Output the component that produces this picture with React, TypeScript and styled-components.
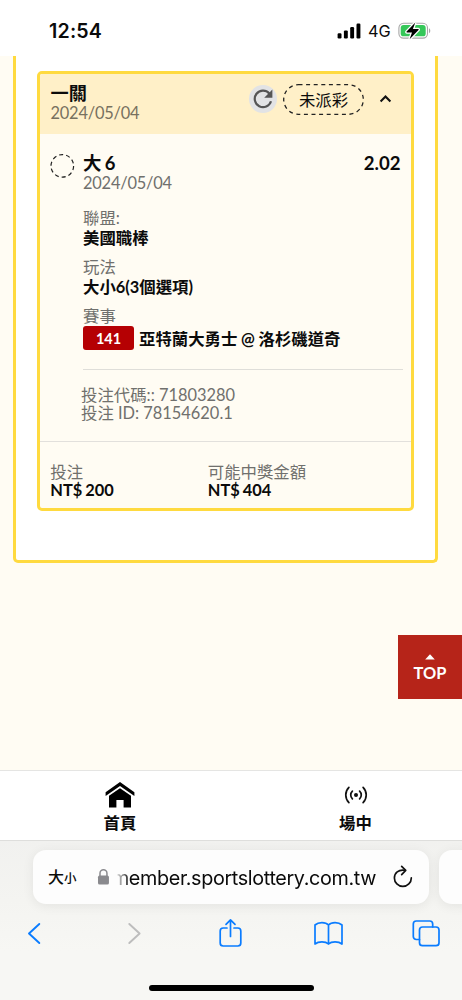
import React from "react";
import styled, { createGlobalStyle } from "styled-components";

const GlobalStyle = createGlobalStyle`
  *, *::before, *::after { box-sizing: border-box; }
  body {
    margin: 0;
    background: #fffcf3;
    color: #0b0b0b;
    font-family: Lato, "Noto Sans CJK TC", sans-serif;
    font-size: 16.4px;
    overflow: hidden;
  }
`;

const Screen = styled.div`
  width: 462px;
  height: 1000px;
  display: flex;
  flex-direction: column;
  overflow: hidden;
`;

const StatusBar = styled.header`
  height: 56px;
  flex: none;
  background: #fff;
  display: flex;
  align-items: center;
  padding: 5px 31px 0 49px;
  font-family: Inter, sans-serif;
`;

const Clock = styled.div`
  flex: 1;
  font-size: 19.6px;
  font-weight: 600;
  letter-spacing: 0.2px;
`;

const Network = styled.div`
  font-size: 16.3px;
  margin: 0 8px 0 7px;
  width: 22px;
  line-height: 20px;
`;

const Page = styled.main`
  flex: 1;
  display: flex;
  flex-direction: column;
  align-items: flex-start;
`;

const Panel = styled.section`
  width: 425px;
  height: 507px;
  margin-left: 13px;
  border: 3px solid #ffda3f;
  border-width: 0 3px 3px;
  border-radius: 0 0 5px 5px;
  background: #fff;
  padding: 15px 21px 0;
`;

const Card = styled.article`
  width: 377px;
  height: 440px;
  border: 3px solid #ffda3f;
  border-radius: 5px;
  background: #fffcf3;
  overflow: hidden;
`;

const CardHeader = styled.div`
  height: 60px;
  background: #fff0c8;
  display: flex;
  align-items: flex-start;
  padding: 9px 19px 0 10.5px;
`;

const Grow = styled.div`
  flex: 1;
  min-width: 0;
`;

const Line = styled.div<{ $h?: number; $top?: number; $bold?: boolean; $size?: number; $muted?: string }>`
  height: ${(p) => p.$h ?? 20}px;
  line-height: ${(p) => p.$h ?? 20}px;
  margin-top: ${(p) => p.$top ?? 0}px;
  font-weight: ${(p) => (p.$bold ? 700 : 400)};
  font-size: ${(p) => p.$size ?? 16.4}px;
  color: ${(p) => p.$muted ?? "#0b0b0b"};
  white-space: nowrap;
  word-spacing: ${(p) => (p.$bold ? -1 : 0)}px;
`;

const DateLine = styled(Line)`
  letter-spacing: -0.2px;
`;

const RefreshButton = styled.button`
  width: 28px;
  height: 28px;
  margin: 2px 6px 0 0;
  padding: 0;
  border: 0;
  border-radius: 50%;
  background: #e2e3e5;
  display: grid;
  place-items: center;
`;

const Pill = styled.div`
  position: relative;
  width: 81px;
  height: 31px;
  margin-top: 1px;
  line-height: 32px;
  text-align: center;
`;

const PillOutline = styled.svg`
  position: absolute;
  inset: 0;
`;

const Caret = styled.svg`
  margin: 11px 0 0 15px;
`;

const Selection = styled.div`
  display: grid;
  grid-template-columns: 33px 1fr;
  padding: 19px 8px 0 9.5px;
  height: 307px;
`;

const Details = styled.div`
  padding-left: 0.5px;
`;

const TitleRow = styled.div`
  display: flex;
  justify-content: space-between;
  padding-right: 2.5px;
`;

const MatchRow = styled.div`
  display: flex;
  align-items: center;
  height: 24px;
  gap: 5px;
  font-weight: 700;
  white-space: nowrap;
  word-spacing: -0.3px;
`;

const MatchNumber = styled.span`
  width: 51px;
  height: 24px;
  border-radius: 3px;
  background: #b50003;
  color: #fff;
  font-size: 14.5px;
  line-height: 25px;
  text-align: center;
`;

const Codes = styled.div`
  margin-top: 19px;
  border-top: 1px solid #dfded9;
  padding-top: 16px;
`;

const CodeLine = styled(Line)`
  margin-left: -2px;
`;

const Summary = styled.div`
  border-top: 1px solid #e2e0dc;
  display: grid;
  grid-template-columns: 157.5px 1fr;
  padding: 21px 0 0 10.3px;
`;

const TopButton = styled.button`
  align-self: flex-end;
  width: 64px;
  height: 64px;
  margin-top: 72px;
  border: 0;
  background: #b62419;
  color: #fff;
  display: flex;
  flex-direction: column;
  align-items: center;
  padding: 18.5px 0 0;
  font: 700 16.4px/26px Lato, sans-serif;
`;

const SiteNav = styled.nav`
  flex: none;
  height: 71px;
  border-top: 1px solid #e5e5e3;
  border-bottom: 1px solid #dededc;
  background: #fff;
  display: grid;
  grid-template-columns: 240px 231px;
`;

const NavItem = styled.div`
  display: flex;
  flex-direction: column;
  align-items: center;
  padding-top: 10px;
  font-weight: 700;
  line-height: 28px;
`;

const Browser = styled.footer`
  flex: none;
  height: 159px;
  background: linear-gradient(#f1f1ef, #f4f4f1 60px, #f7f7f4 110px);
  padding-top: 9px;
`;

const AddressRow = styled.div`
  display: flex;
  gap: 9.5px;
  padding-left: 33px;
`;

const AddressBar = styled.div`
  flex: none;
  width: 396px;
  height: 54px;
  border-radius: 13px;
  background: #fdfdfd;
  box-shadow: 0 2px 12px rgba(0, 0, 0, 0.07);
  display: flex;
  align-items: center;
  padding: 0 15px;
`;

const TextSize = styled.div`
  width: 49px;
  font-family: "Noto Sans CJK TC", sans-serif;
  font-weight: 500;
  font-size: 16px;
  line-height: 24px;
  white-space: nowrap;
`;

const SmallGlyph = styled.span`
  font-size: 12.5px;
`;

const Url = styled.div`
  width: 267.5px;
  display: flex;
  justify-content: flex-end;
  white-space: nowrap;
  font-family: Inter, sans-serif;
  font-size: 19.8px;
  letter-spacing: -0.36px;
  line-height: 30px;
  padding-top: 1px;
  mask-image: linear-gradient(to right, transparent 7px, rgba(0, 0, 0, 0.2) 8px, #000 20px);
`;

const Reload = styled.svg`
  margin-left: 16px;
`;

const Toolbar = styled.div`
  display: flex;
  justify-content: space-between;
  padding: 13px 20px 0 18px;
  height: 80.5px;
`;

const HomeIndicator = styled.div`
  width: 165px;
  height: 6px;
  border-radius: 3px;
  background: #000;
  margin: 0 auto;
`;

const GREY = "#70706d";

function ToolIcon({ children, color = "#0a7cff" }: { children: React.ReactNode; color?: string }) {
  return (
    <svg width="32" height="32" viewBox="0 0 32 32" fill="none" stroke={color} strokeWidth="1.9" strokeLinecap="round" strokeLinejoin="round">
      {children}
    </svg>
  );
}

export default function App() {
  return (
    <Screen>
      <GlobalStyle />
      <StatusBar>
        <Clock>12:54</Clock>
        <svg width="24" height="16" viewBox="0 0 24 16">
          <rect x="0.6" y="10.2" width="3.9" height="5.2" rx="1.2" />
          <rect x="6.9" y="7.4" width="3.9" height="8" rx="1.2" />
          <rect x="13.2" y="4" width="3.9" height="11.4" rx="1.2" />
          <rect x="19.5" y="0.6" width="3.9" height="14.8" rx="1.2" />
        </svg>
        <Network>4G</Network>
        <svg width="33" height="18" viewBox="0 0 33 18">
          <rect x="0.9" y="1.3" width="28.6" height="14.8" rx="4.6" fill="none" stroke="#a7a7a7" strokeWidth="1.1" />
          <rect x="2.7" y="3.1" width="25" height="11.2" rx="2.9" fill="#35c759" />
          <path d="M31 6.3c1.7.8 1.7 4.1 0 4.9z" fill="#a7a7a7" />
          <path d="M17.3 0.5 8.6 9.6c-.4.5-.2.9.4.9h5l-2.4 6.8 8.9-9.3c.4-.5.2-.9-.4-.9h-5.2z" fill="#000" stroke="#fff" strokeWidth="2.6" paintOrder="stroke" />
        </svg>
      </StatusBar>

      <Page>
        <Panel>
          <Card>
            <CardHeader>
              <Grow>
                <Line $bold $size={18.2}>一關</Line>
                <DateLine $muted="#77715f">2024/05/04</DateLine>
              </Grow>
              <RefreshButton>
                <svg width="22" height="22" viewBox="0 0 22 22" fill="none">
                  <path d="M17.3 5.4A8.3 8.3 0 1 0 19 13.3" stroke="#555" strokeWidth="2.2" />
                  <path d="M20.4 1.6v8.2h-8.2z" fill="#555" />
                </svg>
              </RefreshButton>
              <Pill>
                <PillOutline width="81" height="31" fill="none">
                  <rect x="0.7" y="0.7" width="79.6" height="29.6" rx="14.8" stroke="#222" strokeWidth="1.3" strokeDasharray="4 3.6" />
                </PillOutline>
                未派彩
              </Pill>
              <Caret width="13" height="10" viewBox="0 0 13 10" fill="none">
                <path d="M1.6 7.4 6.5 2.5l4.9 4.9" stroke="#111" strokeWidth="2.1" />
              </Caret>
            </CardHeader>

            <Selection>
              <svg width="26" height="26" viewBox="0 0 26 26" fill="none">
                <circle cx="12.3" cy="12.9" r="11.3" stroke="#222" strokeWidth="1.2" strokeDasharray="4.1 3" />
              </svg>
              <Details>
                <TitleRow>
                  <Line $bold $size={18.4}>大 6</Line>
                  <Line $bold $size={18.6}>2.02</Line>
                </TitleRow>
                <DateLine $muted={GREY}>2024/05/04</DateLine>
                <Line $top={15} $muted={GREY}>聯盟:</Line>
                <Line $bold>美國職棒</Line>
                <Line $top={9} $muted={GREY}>玩法</Line>
                <Line $bold>大小6(3個選項)</Line>
                <Line $top={9} $muted={GREY}>賽事</Line>
                <MatchRow>
                  <MatchNumber>141</MatchNumber>
                  <span>亞特蘭大勇士 @ 洛杉磯道奇</span>
                </MatchRow>
                <Codes>
                  <CodeLine $h={18} $muted={GREY}>投注代碼:: 71803280</CodeLine>
                  <CodeLine $h={18} $muted={GREY}>投注 ID: 78154620.1</CodeLine>
                </Codes>
              </Details>
            </Selection>

            <Summary>
              <div>
                <Line $h={18} $muted={GREY}>投注</Line>
                <Line $h={18} $bold>NT$ 200</Line>
              </div>
              <div>
                <Line $h={18} $muted={GREY}>可能中獎金額</Line>
                <Line $h={18} $bold>NT$ 404</Line>
              </div>
            </Summary>
          </Card>
        </Panel>

        <TopButton>
          <svg width="10" height="6" viewBox="0 0 10 6"><path d="M5 0.3 9.8 5.6H.2z" fill="#fff" /></svg>
          TOP
        </TopButton>
      </Page>

      <SiteNav>
        <NavItem>
          <svg width="30" height="28" viewBox="0 0 30 28">
            <path d="M15 1 29.4 11.2v3.7L15 4.9.6 14.9v-3.7z" />
            <path d="M15 7.2 26 14.8V26.6h-7.4v-7.5h-7.2v7.5H4V14.8z" />
          </svg>
          <span>首頁</span>
        </NavItem>
        <NavItem>
          <svg width="24" height="28" viewBox="0 0 24 28" fill="none" stroke="#111" strokeWidth="1.7" strokeLinecap="round">
            <circle cx="12" cy="14" r="2" fill="#111" stroke="none" />
            <path d="M8.4 10.1a5.4 5.4 0 0 0 0 7.8M15.6 10.1a5.4 5.4 0 0 1 0 7.8M4.9 6.4a10.8 10.8 0 0 0 0 15.2M19.1 6.4a10.8 10.8 0 0 1 0 15.2" />
          </svg>
          <span>場中</span>
        </NavItem>
      </SiteNav>

      <Browser>
        <AddressRow>
          <AddressBar>
            <TextSize>大<SmallGlyph>小</SmallGlyph></TextSize>
            <svg width="13" height="18" viewBox="0 0 13 18" fill="none">
              <path d="M3 8.5V5.2a3.5 3.5 0 0 1 7 0v3.3" stroke="#8a8a8e" strokeWidth="1.5" />
              <rect x="1" y="7.6" width="11" height="9" rx="1.6" fill="#8a8a8e" />
            </svg>
            <Url>member.sportslottery.com.tw</Url>
            <Reload width="22" height="24" viewBox="0 0 22 24" fill="none" stroke="#111" strokeWidth="1.7" strokeLinecap="round" strokeLinejoin="round">
              <path d="M12.6 5.2c-6-1-10.2 3-10.2 7.7a8.5 8.5 0 0 0 17 0" />
              <path d="M9.7 1.3 13.8 5.4 9.7 9.6" />
            </Reload>
          </AddressBar>
          <AddressBar />
        </AddressRow>
        <Toolbar>
          <ToolIcon><path d="M21.3 7 11 16.5 21.3 26" /></ToolIcon>
          <ToolIcon color="#bdbdbd"><path d="M13.3 7 23.6 16.5 13.3 26" /></ToolIcon>
          <ToolIcon>
            <path d="M13 11H9.2a3 3 0 0 0-3 3v12a3 3 0 0 0 3 3h14.6a3 3 0 0 0 3-3V14a3 3 0 0 0-3-3H20" strokeWidth="1.7" />
            <path d="M16.5 19.5V3M12 7.3 16.5 2.8 21 7.3" strokeWidth="1.7" />
          </ToolIcon>
          <ToolIcon>
            <path d="M16.5 8C13.5 4.8 6.5 4.8 3 8v19c3.5-2.8 10.5-2.8 13.5 0 3-2.8 10-2.8 13.5 0V8c-3.5-3.2-10.5-3.2-13.5 0zv19" strokeWidth="1.7" />
          </ToolIcon>
          <ToolIcon>
            <rect x="9.5" y="10" width="19.5" height="18.7" rx="3" strokeWidth="1.7" />
            <path d="M9.5 22.5H6.3a3 3 0 0 1-3-3V7a3 3 0 0 1 3-3h13.4a3 3 0 0 1 3 3v3" strokeWidth="1.7" />
          </ToolIcon>
        </Toolbar>
        <HomeIndicator />
      </Browser>
    </Screen>
  );
}
